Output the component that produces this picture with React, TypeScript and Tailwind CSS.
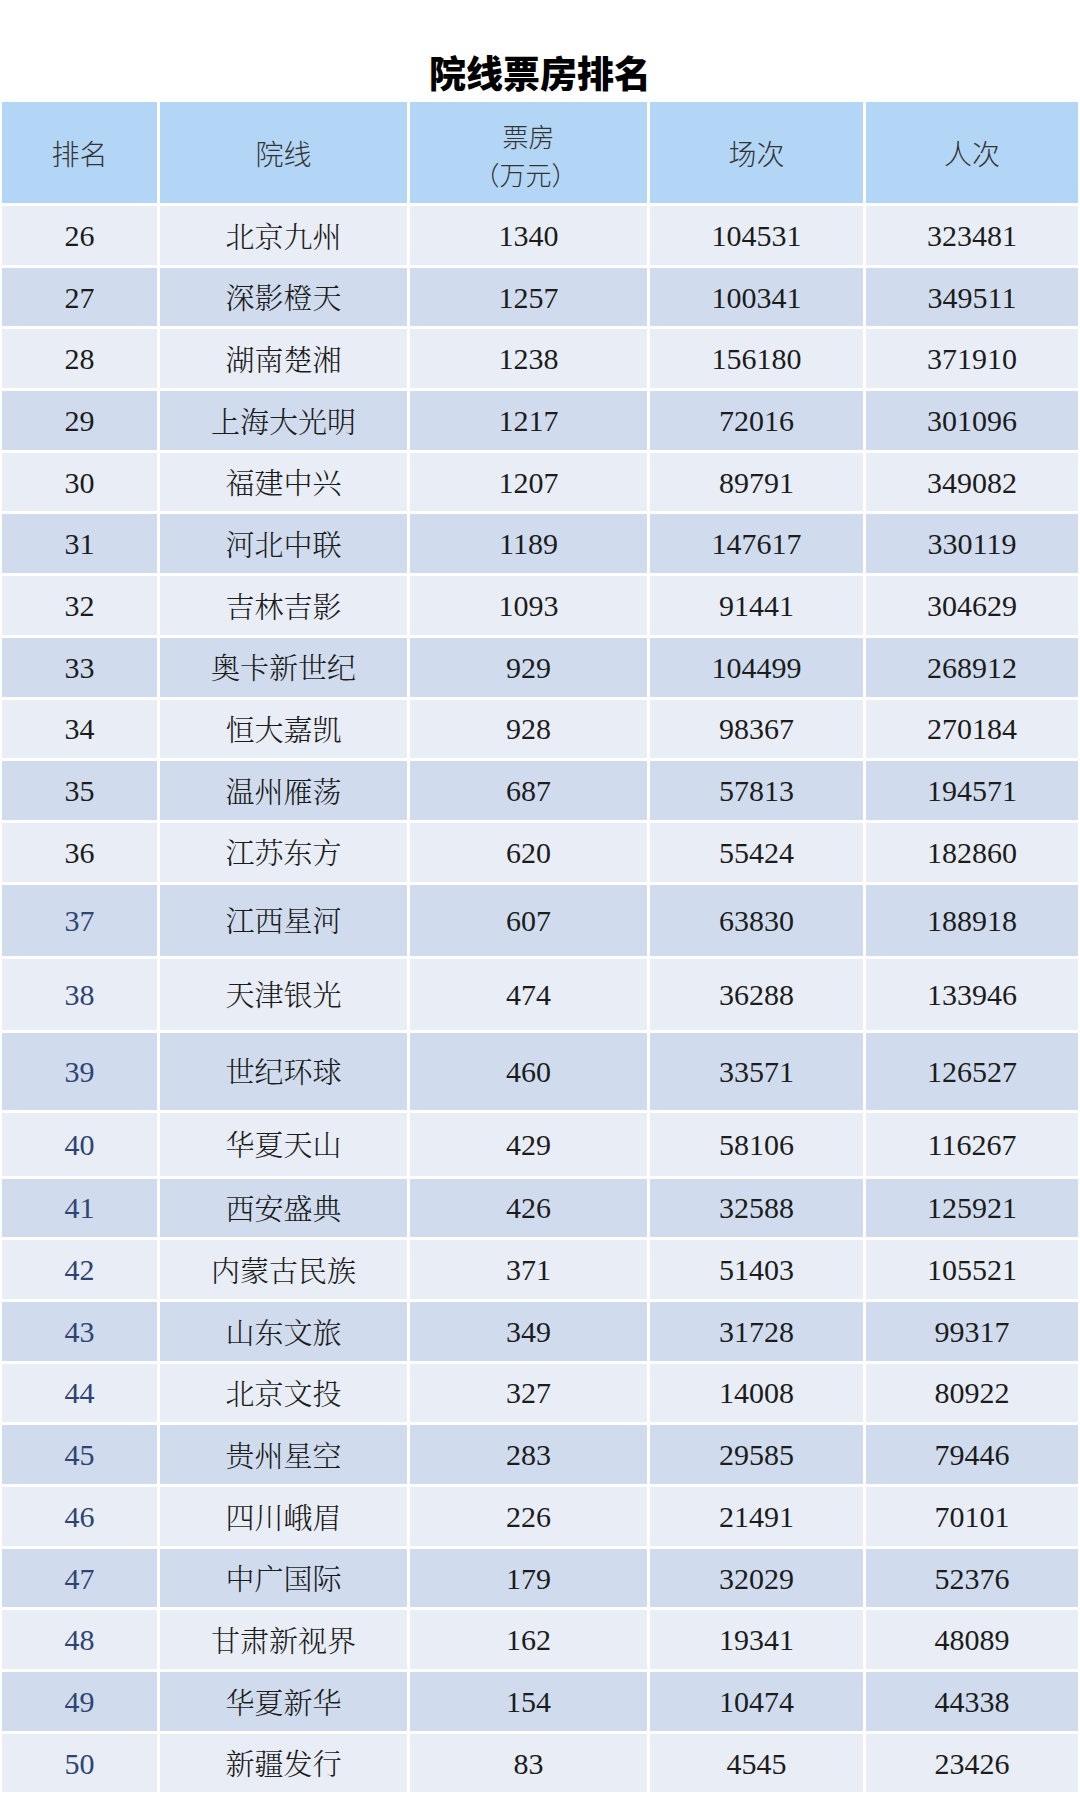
import React from "react";

type Row = [number, string, number, number, number];

const rows: Row[] = [
  [26, "北京九州", 1340, 104531, 323481],
  [27, "深影橙天", 1257, 100341, 349511],
  [28, "湖南楚湘", 1238, 156180, 371910],
  [29, "上海大光明", 1217, 72016, 301096],
  [30, "福建中兴", 1207, 89791, 349082],
  [31, "河北中联", 1189, 147617, 330119],
  [32, "吉林吉影", 1093, 91441, 304629],
  [33, "奥卡新世纪", 929, 104499, 268912],
  [34, "恒大嘉凯", 928, 98367, 270184],
  [35, "温州雁荡", 687, 57813, 194571],
  [36, "江苏东方", 620, 55424, 182860],
  [37, "江西星河", 607, 63830, 188918],
  [38, "天津银光", 474, 36288, 133946],
  [39, "世纪环球", 460, 33571, 126527],
  [40, "华夏天山", 429, 58106, 116267],
  [41, "西安盛典", 426, 32588, 125921],
  [42, "内蒙古民族", 371, 51403, 105521],
  [43, "山东文旅", 349, 31728, 99317],
  [44, "北京文投", 327, 14008, 80922],
  [45, "贵州星空", 283, 29585, 79446],
  [46, "四川峨眉", 226, 21491, 70101],
  [47, "中广国际", 179, 32029, 52376],
  [48, "甘肃新视界", 162, 19341, 48089],
  [49, "华夏新华", 154, 10474, 44338],
  [50, "新疆发行", 83, 4545, 23426],
];

const heightClass = (rank: number) => {
  if (rank === 37 || rank === 38) return "h-[71px]";
  if (rank === 39) return "h-[77px]";
  if (rank === 40) return "h-[63px]";
  return "h-[58.7px]";
};

const numFont = "[font-family:'Liberation_Serif','Noto_Serif_CJK_SC','Noto_Sans_CJK_SC',serif]";

export default function App() {
  return (
    <div className="w-[1080px] h-[1800px] bg-white overflow-hidden">
      <div className="h-[102px] pt-[50px] text-center">
        <h1 className="text-[37px] leading-[44px] font-black text-black [font-family:'Noto_Sans_CJK_SC',sans-serif]">
          院线票房排名
        </h1>
      </div>
      <div className="grid grid-cols-[155px_247px_237px_213px_212px] gap-[3px] px-[2px]">
        {["排名", "院线", null, "场次", "人次"].map((h, i) => (
          <div
            key={i}
            className="h-[101px] bg-[#b3d6f6] flex flex-col items-center justify-center text-[#333] font-light [font-family:'Noto_Sans_CJK_SC',sans-serif]"
          >
            {h === null ? (
              <div className="flex flex-col items-center text-[26px] leading-[38px] pt-[4px]">
                <span>票房</span>
                <span className="-ml-[6px]">（万元）</span>
              </div>
            ) : (
              <span className="text-[28px] leading-[40px]">{h}</span>
            )}
          </div>
        ))}
        {rows.map((r, idx) => {
          const bg = idx % 2 === 0 ? "bg-[#e9edf6]" : "bg-[#d0dcee]";
          const hc = heightClass(r[0]);
          const rankColor = r[0] >= 37 ? "text-[#2f4473]" : "text-[#1c1c1c]";
          return (
            <React.Fragment key={r[0]}>
              <div className={`${hc} ${bg} flex items-center justify-center text-[30px] ${rankColor} ${numFont}`}>
                {r[0]}
              </div>
              <div className={`${hc} ${bg} flex items-center justify-center text-[29px] text-[#1c1c1c] font-light [font-family:'Noto_Serif_CJK_SC','Noto_Sans_CJK_SC',serif]`}>
                {r[1]}
              </div>
              <div className={`${hc} ${bg} flex items-center justify-center text-[30px] text-[#1c1c1c] ${numFont}`}>
                {r[2]}
              </div>
              <div className={`${hc} ${bg} flex items-center justify-center text-[30px] text-[#1c1c1c] ${numFont}`}>
                {r[3]}
              </div>
              <div className={`${hc} ${bg} flex items-center justify-center text-[30px] text-[#1c1c1c] ${numFont}`}>
                {r[4]}
              </div>
            </React.Fragment>
          );
        })}
      </div>
    </div>
  );
}
